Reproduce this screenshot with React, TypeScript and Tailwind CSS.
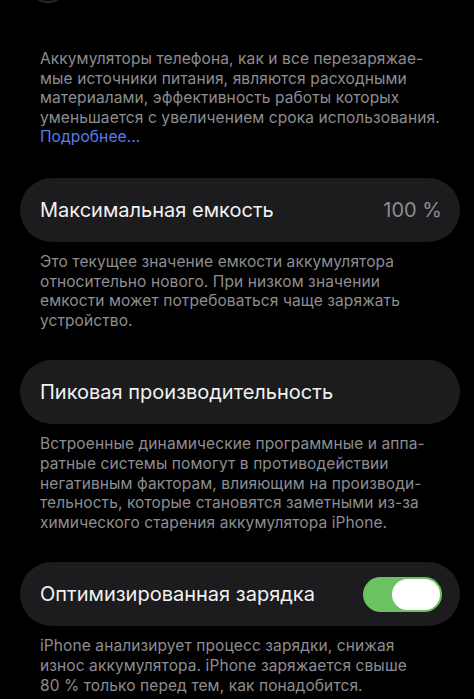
import React from 'react'

const font = { fontFamily: 'Inter, "Noto Sans", sans-serif' }

function Note({ lines, link }: { lines: string[]; link?: string }) {
  return (
    <div className="px-[40px] text-[15.5px] leading-[19.6px] text-[#8d8d92] tracking-[0.1px]">
      {lines.map((l, i) => (
        <div key={i} className="whitespace-nowrap">{l}</div>
      ))}
      {link && <div className="text-[#5b7cf2]">{link}</div>}
    </div>
  )
}

function Card({ children }: { children: React.ReactNode }) {
  return (
    <div className="ml-[20px] mr-[14px] h-[64px] rounded-full bg-[#1c1c1e] pl-[20px] pr-[18px] flex items-center justify-between">
      {children}
    </div>
  )
}

export default function App() {
  return (
    <div className="min-h-[699px] w-[474px] bg-black overflow-hidden" style={font}>
      {/* top button edge */}
      <div className="h-[4px] overflow-hidden pl-[30px]">
        <div className="w-[36px] h-[36px] -mt-[33px] rounded-full border border-[#3a3a3c] bg-[#111]" />
      </div>

      <div className="pt-[45px]">
        <Note
          lines={[
            'Аккумуляторы телефона, как и все перезаряжае-',
            'мые источники питания, являются расходными',
            'материалами, эффективность работы которых',
            'уменьшается с увеличением срока использования.',
          ]}
          link="Подробнее..."
        />
      </div>

      <div className="mt-[31px]">
        <Card>
          <span className="text-[20px] text-[#f2f2f2]">Максимальная емкость</span>
          <span className="text-[20px] text-[#8d8d92]">100 %</span>
        </Card>
      </div>

      <div className="mt-[10px]">
        <Note
          lines={[
            'Это текущее значение емкости аккумулятора',
            'относительно нового. При низком значении',
            'емкости может потребоваться чаще заряжать',
            'устройство.',
          ]}
        />
      </div>

      <div className="mt-[30px]">
        <Card>
          <span className="text-[20px] text-[#f2f2f2]">Пиковая производительность</span>
        </Card>
      </div>

      <div className="mt-[10px]">
        <Note
          lines={[
            'Встроенные динамические программные и аппа-',
            'ратные системы помогут в противодействии',
            'негативным факторам, влияющим на производи-',
            'тельность, которые становятся заметными из-за',
            'химического старения аккумулятора iPhone.',
          ]}
        />
      </div>

      <div className="mt-[30px]">
        <Card>
          <span className="text-[20px] text-[#f2f2f2]">Оптимизированная зарядка</span>
          <div className="w-[79px] h-[35px] rounded-full bg-[#6cc260] flex items-center justify-end pr-[2px]">
            <div className="w-[48px] h-[31px] rounded-full bg-white" />
          </div>
        </Card>
      </div>

      <div className="mt-[10px]">
        <Note
          lines={[
            'iPhone анализирует процесс зарядки, снижая',
            'износ аккумулятора. iPhone заряжается свыше',
            '80 % только перед тем, как понадобится.',
          ]}
        />
      </div>
    </div>
  )
}
